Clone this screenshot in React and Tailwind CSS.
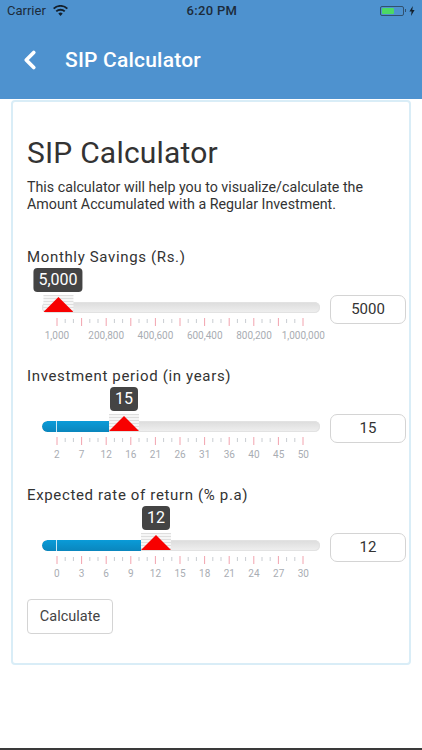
import { ChevronLeft } from 'lucide-react';

const sliders = [
  { label: 'Monthly Savings (Rs.)', bubble: '5,000', value: '5000', left: 16, fill: 0, labels: ['1,000', '', '200,800', '', '400,600', '', '600,400', '', '800,200', '', '1,000,000'] },
  { label: 'Investment period (in years)', bubble: '15', value: '15', left: 82, fill: 67, labels: ['2', '7', '12', '16', '21', '26', '31', '36', '40', '45', '50'] },
  { label: 'Expected rate of return (% p.a)', bubble: '12', value: '12', left: 114, fill: 99, labels: ['0', '3', '6', '9', '12', '15', '18', '21', '24', '27', '30'] },
];

function Ticks() {
  const lines = [];
  for (let i = 0; i <= 30; i++) {
    const x = 15 + i * 8.2;
    const major = i % 3 === 0;
    lines.push(
      <line key={i} x1={x} x2={x} y1={major ? 0 : 1} y2={major ? 8 : 5} stroke={major ? '#f2a3ae' : '#c9cdd2'} strokeWidth="1" />
    );
  }
  return (
    <svg width="278" height="8" className="block">
      {lines}
    </svg>
  );
}

function Slider({ item }) {
  return (
    <div className="mb-[23px]">
      <div className="text-[15px] leading-[20px] tracking-[0.65px] text-[#333]">{item.label}</div>
      <div className="flex items-start">
        <div className="relative ml-[15px] w-[278px] pt-[35px]">
          <div className="h-[11px] overflow-hidden rounded-full bg-gradient-to-b from-[#dcdcdc] to-[#f0f0f0] shadow-[inset_0_0_0_1px_#e2e2e2]">
            <div className="relative h-full rounded-l-full bg-gradient-to-b from-[#0a9bd8] to-[#0a86bd]" style={{ width: item.fill }}>
              {item.fill > 0 && <div className="absolute left-[14px] top-0 h-full w-px bg-[#cfe9f5]" />}
            </div>
          </div>
          <div className="absolute top-[1px] flex -translate-x-1/2 flex-col items-center" style={{ left: item.left }}>
            <div className="rounded-[4px] bg-[#444] px-[5px] text-[16px] leading-[24px] text-white">{item.bubble}</div>
            <div className="relative mt-[3px] h-[17px] w-[30px] bg-[repeating-linear-gradient(#dedede_0,#dedede_1px,#f6f6f6_1px,#f6f6f6_3px)]">
              <svg width="30" height="15" className="absolute bottom-0 left-0">
                <polygon points="15,0 30,15 0,15" fill="#f80000" />
              </svg>
            </div>
          </div>
          <div className="mt-[5px]">
            <Ticks />
          </div>
          <div className="mt-[3px] grid w-[271px] translate-x-[2.6px] grid-cols-11 text-center text-[10px] leading-[14px] text-[#a9adb3]">
            {item.labels.map((label, i) => (
              <span key={i} className="flex justify-center whitespace-nowrap">{label}</span>
            ))}
          </div>
        </div>
        <div className="ml-[10px] mt-[28px] flex h-[29px] w-[76px] shrink-0 items-center justify-center rounded-[7px] border border-[#d4d4d4] text-[15px] text-[#333]">
          {item.value}
        </div>
      </div>
    </div>
  );
}

export default function App() {
  return (
    <div className="flex h-[750px] w-[422px] flex-col overflow-hidden bg-white font-['Roboto',sans-serif]">
      <div className="h-[99px] shrink-0 bg-[#4e92cf]">
        <div className="flex h-[21px] items-center justify-between px-[7px] text-[#1c2b3a]">
          <div className="flex items-center gap-[7px] text-[13px]">
            <span>Carrier</span>
            <svg width="15" height="11" viewBox="0 0 15 11">
              <path d="M7.5 11 5.3 8.5a3.2 3.2 0 0 1 4.4 0zM3.9 7.1 2.6 5.7a7.2 7.2 0 0 1 9.8 0l-1.3 1.4a5.3 5.3 0 0 0-7.2 0zM1.3 4.3 0 2.9a11 11 0 0 1 15 0l-1.3 1.4a9.1 9.1 0 0 0-12.4 0z" fill="#14202c" />
            </svg>
          </div>
          <span className="-ml-[24px] text-[13px] font-medium tracking-[0.3px]">6:20 PM</span>
          <div className="flex items-center gap-[3px]">
            <div className="flex items-center">
              <div className="h-[10px] w-[24px] rounded-[2px] border border-[#31516f] p-[1px]">
                <div className="h-full w-[12px] rounded-[1px] bg-[#4cd964]" />
              </div>
              <div className="ml-[1px] h-[3px] w-px bg-[#31516f]" />
            </div>
            <svg width="6" height="10" viewBox="0 0 6 10">
              <polygon points="3.8,0 0.4,5.6 2.6,5.6 2,10 5.6,4 3.3,4" fill="#14202c" />
            </svg>
          </div>
        </div>
        <div className="mt-[21px] flex h-[38px] items-center">
          <ChevronLeft size={30} strokeWidth={3} color="#fff" className="-mt-[2px] ml-[15px]" />
          <span className="ml-[20px] text-[21px] font-medium tracking-[0.2px] text-white">SIP Calculator</span>
        </div>
      </div>

      <div className="mx-[11px] mt-px h-[565px] shrink-0 rounded-[4px] border-2 border-[#d9edf7] px-[14px] pt-[30px]">
        <h1 className="text-[30px] font-normal leading-[42px] tracking-[0.2px] text-[#333]">SIP Calculator</h1>
        <p className="mt-[5px] text-[14.25px] leading-[17px] text-[#333]">
          This calculator will help you to visualize/calculate the Amount Accumulated with a Regular Investment.
        </p>
        <div className="mt-[34px]">
          {sliders.map((item) => (
            <Slider key={item.label} item={item} />
          ))}
        </div>
        <button type="button" className="-mt-[5px] h-[35px] w-[86px] rounded-[4px] border border-[#d4d4d4] text-[14.5px] text-[#444]">
          Calculate
        </button>
      </div>

      <div className="flex-1" />
      <div className="h-[2px] shrink-0 bg-[#3a3a3a]" />
    </div>
  );
}
